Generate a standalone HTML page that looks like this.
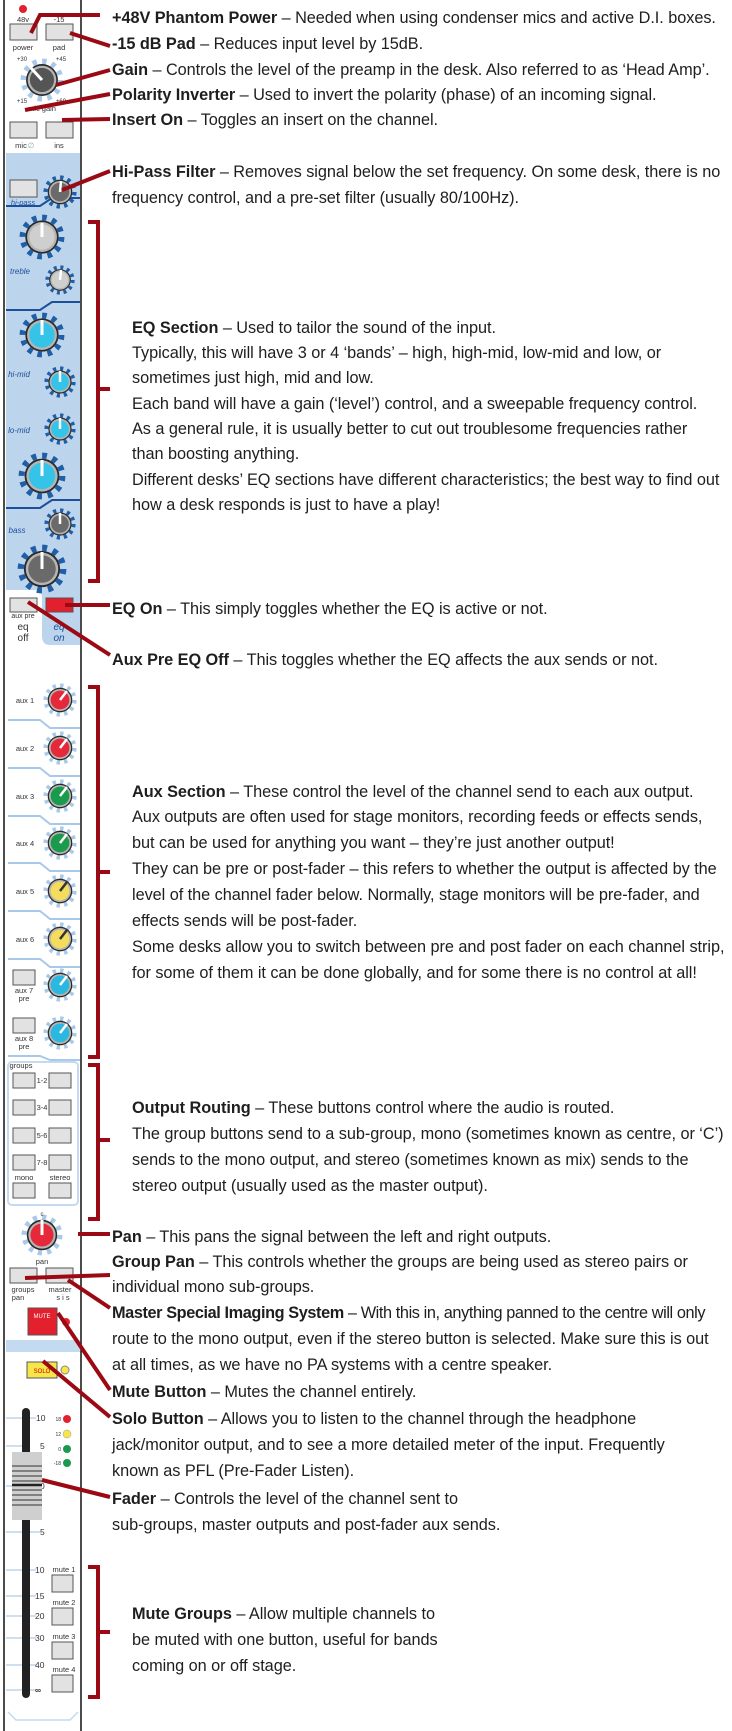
<!DOCTYPE html>
<html><head><meta charset="utf-8"><style>
html,body{margin:0;padding:0;background:#fff;}
body{width:732px;height:1731px;position:relative;overflow:hidden;font-family:"Liberation Sans",sans-serif;}
.t{position:absolute;white-space:nowrap;font-size:16.3px;letter-spacing:-0.05px;line-height:20px;color:#1e1e1e;}
svg{position:absolute;left:0;top:0;}
</style></head><body>
<svg width="732" height="1731" viewBox="0 0 732 1731" font-family="Liberation Sans, sans-serif">
<defs>
<symbol id="kd" viewBox="-20 -20 40 40"><circle r="17" fill="none" stroke="#1f5fa8" stroke-width="5" stroke-dasharray="4 4.9"/><circle r="14.5" fill="#2a2a2a"/><circle r="13" fill="#b5b5b5"/><circle r="11"/></symbol>
<symbol id="kl" viewBox="-20 -20 40 40"><circle r="17" fill="none" stroke="#a9c9ea" stroke-width="5" stroke-dasharray="4 4.9"/><circle r="14.5" fill="#2a2a2a"/><circle r="13" fill="#b5b5b5"/><circle r="11"/></symbol>
</defs>
<rect x="4" y="0" width="77" height="1731" fill="#fff"/>
<rect x="6" y="153" width="74" height="503" fill="#bcd4ec"/>
<path d="M6 590 H34 Q42 590 42 598 V636 Q42 645 50 645 H80 V656 H6 Z" fill="#fff"/>
<path d="M6 206 H40 L52 198 H80" stroke="#1c4f9c" stroke-width="2" fill="none"/>
<path d="M6 310 H40 L52 302 H80" stroke="#1c4f9c" stroke-width="2" fill="none"/>
<path d="M6 508 H40 L52 500 H80" stroke="#1c4f9c" stroke-width="2" fill="none"/>
<line x1="4" y1="0" x2="4" y2="1731" stroke="#111" stroke-width="1.5"/>
<line x1="81" y1="0" x2="81" y2="1731" stroke="#111" stroke-width="1.5"/>
<g fill="#333" font-size="7.5" text-anchor="middle">
<circle cx="23" cy="9" r="4" fill="#e0202e"/>
<text x="23" y="22">48v</text><text x="59" y="22">-15</text>
<rect x="10" y="24" width="27" height="16" fill="#e2e2e2" stroke="#555"/>
<rect x="46" y="24" width="27" height="16" fill="#e2e2e2" stroke="#555"/>
<text x="23" y="50">power</text><text x="59" y="50">pad</text>
<use href="#kl" x="20" y="58" width="44" height="44" fill="#555"/>
<line x1="42" y1="80" x2="31" y2="68" stroke="#fff" stroke-width="3"/>
<text x="22" y="61" font-size="6">+30</text><text x="61" y="61" font-size="6">+45</text>
<text x="22" y="103" font-size="6">+15</text><text x="61" y="103" font-size="6">+60</text>
<text x="42" y="111">mic gain</text>
<rect x="10" y="122" width="27" height="16" fill="#e2e2e2" stroke="#555"/>
<rect x="46" y="122" width="27" height="16" fill="#e2e2e2" stroke="#555"/>
<text x="21" y="148">mic</text><text x="31" y="148" fill="#8ab">∅</text><text x="59" y="148">ins</text>
<rect x="10" y="180" width="27" height="17" fill="#e2e2e2" stroke="#555"/>
<text x="23" y="205" fill="#1c4f9c" font-style="italic">hi-pass</text>
<use href="#kd" x="43" y="175" width="34" height="34" fill="#6a6a6a"/>
<line x1="60" y1="192" x2="61" y2="181" stroke="#fff" stroke-width="2.5"/>
<use href="#kd" x="19" y="214" width="46" height="46" fill="#cfcfcf"/>
<line x1="42" y1="237" x2="42" y2="223" stroke="#fff" stroke-width="3"/>
<text x="20" y="274" fill="#1c4f9c" font-style="italic" font-size="8">treble</text>
<use href="#kd" x="45" y="265" width="30" height="30" fill="#cfcfcf"/>
<line x1="60" y1="280" x2="61" y2="270" stroke="#fff" stroke-width="2.5"/>
<use href="#kd" x="19" y="312" width="46" height="46" fill="#36c3e8"/>
<line x1="42" y1="335" x2="42" y2="320" stroke="#fff" stroke-width="3"/>
<text x="19" y="377" fill="#1c4f9c" font-style="italic" font-size="8">hi-mid</text>
<use href="#kd" x="44" y="366" width="32" height="32" fill="#36c3e8"/>
<line x1="60" y1="382" x2="60" y2="371" stroke="#fff" stroke-width="2.5"/>
<text x="19" y="433" fill="#1c4f9c" font-style="italic" font-size="8">lo-mid</text>
<use href="#kd" x="44" y="413" width="32" height="32" fill="#36c3e8"/>
<line x1="60" y1="429" x2="60" y2="418" stroke="#fff" stroke-width="2.5"/>
<use href="#kd" x="18" y="452" width="48" height="48" fill="#36c3e8"/>
<line x1="42" y1="476" x2="42" y2="460" stroke="#fff" stroke-width="3"/>
<text x="17" y="533" fill="#1c4f9c" font-style="italic" font-size="8">bass</text>
<use href="#kd" x="44" y="508" width="32" height="32" fill="#6a6a6a"/>
<line x1="60" y1="524" x2="60" y2="513" stroke="#fff" stroke-width="2.5"/>
<use href="#kd" x="17" y="544" width="50" height="50" fill="#6a6a6a"/>
<line x1="42" y1="569" x2="42" y2="552" stroke="#fff" stroke-width="3"/>
<rect x="10" y="598" width="27" height="14" fill="#e2e2e2" stroke="#555"/>
<rect x="46" y="598" width="27" height="14" fill="#e3202e" stroke="#555"/>
<text x="23" y="618" font-size="7">aux pre</text>
<text x="23" y="630" font-size="10">eq</text><text x="23" y="641" font-size="10">off</text>
<text x="59" y="630" font-size="10" fill="#1c4f9c" font-style="italic">eq</text><text x="59" y="641" font-size="10" fill="#1c4f9c" font-style="italic">on</text>
</g>
<g font-size="7.5" fill="#333" text-anchor="middle">
<use href="#kl" x="43" y="683" width="34" height="34" fill="#e5283a"/><line x1="60" y1="700" x2="67" y2="691" stroke="#fff" stroke-width="2.5"/><text x="25" y="703">aux 1</text>
<use href="#kl" x="43" y="731" width="34" height="34" fill="#e5283a"/><line x1="60" y1="748" x2="67" y2="739" stroke="#fff" stroke-width="2.5"/><text x="25" y="751">aux 2</text>
<use href="#kl" x="43" y="779" width="34" height="34" fill="#1a9a4c"/><line x1="60" y1="796" x2="67" y2="787" stroke="#fff" stroke-width="2.5"/><text x="25" y="799">aux 3</text>
<use href="#kl" x="43" y="826" width="34" height="34" fill="#1a9a4c"/><line x1="60" y1="843" x2="67" y2="834" stroke="#fff" stroke-width="2.5"/><text x="25" y="846">aux 4</text>
<use href="#kl" x="43" y="874" width="34" height="34" fill="#f4dc5c"/><line x1="60" y1="891" x2="67" y2="882" stroke="#333" stroke-width="2.5"/><text x="25" y="894">aux 5</text>
<use href="#kl" x="43" y="922" width="34" height="34" fill="#f4dc5c"/><line x1="60" y1="939" x2="67" y2="930" stroke="#333" stroke-width="2.5"/><text x="25" y="942">aux 6</text>
<use href="#kl" x="43" y="968" width="34" height="34" fill="#2ab8e0"/><line x1="60" y1="985" x2="67" y2="976" stroke="#fff" stroke-width="2.5"/>
<rect x="13" y="970" width="22" height="15" fill="#e2e2e2" stroke="#555"/><text x="24" y="993">aux 7</text><text x="24" y="1001">pre</text>
<use href="#kl" x="43" y="1016" width="34" height="34" fill="#2ab8e0"/><line x1="60" y1="1033" x2="67" y2="1024" stroke="#fff" stroke-width="2.5"/>
<rect x="13" y="1018" width="22" height="15" fill="#e2e2e2" stroke="#555"/><text x="24" y="1041">aux 8</text><text x="24" y="1049">pre</text>
<path d="M8 720 H40 L50 728 H80 M8 768 H40 L50 776 H80 M8 816 H40 L50 824 H80 M8 863 H40 L50 871 H80 M8 911 H40 L50 919 H80 M8 959 H40 L50 967 H80 M8 1056 H40 L50 1060 H80" stroke="#a9c9ea" stroke-width="2" fill="none"/>
<rect x="8" y="1062" width="70" height="143" rx="4" fill="none" stroke="#c4daf0" stroke-width="2"/>
<text x="21" y="1068">groups</text>
<g fill="#e2e2e2" stroke="#555">
<rect x="13" y="1073" width="22" height="15"/><rect x="49" y="1073" width="22" height="15"/>
<rect x="13" y="1100" width="22" height="15"/><rect x="49" y="1100" width="22" height="15"/>
<rect x="13" y="1128" width="22" height="15"/><rect x="49" y="1128" width="22" height="15"/>
<rect x="13" y="1155" width="22" height="15"/><rect x="49" y="1155" width="22" height="15"/>
<rect x="13" y="1183" width="22" height="15"/><rect x="49" y="1183" width="22" height="15"/>
</g>
<text x="42" y="1083">1-2</text><text x="42" y="1110">3-4</text><text x="42" y="1138">5-6</text><text x="42" y="1165">7-8</text>
<text x="24" y="1180">mono</text><text x="60" y="1180">stereo</text>
<use href="#kl" x="21" y="1214" width="42" height="42" fill="#e5283a"/>
<line x1="42" y1="1235" x2="42" y2="1220" stroke="#fff" stroke-width="3"/>
<text x="42" y="1216" font-size="6">c</text>
<text x="42" y="1264">pan</text>
<rect x="10" y="1268" width="27" height="15" fill="#e2e2e2" stroke="#555"/>
<rect x="46" y="1268" width="27" height="15" fill="#e2e2e2" stroke="#555"/>
<text x="23" y="1292">groups</text><text x="18" y="1300">pan</text><text x="60" y="1292">master</text><text x="63" y="1300">s i s</text>
<rect x="28" y="1308" width="29" height="27" fill="#e3202e" stroke="#555"/>
<text x="42" y="1318" font-size="6" fill="#fff">MUTE</text>
<circle cx="66" cy="1322" r="4" fill="#e3202e"/>
<rect x="6" y="1340" width="74" height="12" fill="#c4daf0"/>
<rect x="27" y="1362" width="30" height="16" fill="#f6e64a" stroke="#555"/>
<text x="42" y="1373" font-size="6" fill="#c00">SOLO</text>
<circle cx="65" cy="1370" r="4" fill="#f6e64a" stroke="#888"/>
<g stroke="#bcd4ec" stroke-width="1.5">
<line x1="6" y1="1418" x2="22" y2="1418"/><line x1="6" y1="1446" x2="22" y2="1446"/><line x1="6" y1="1486" x2="22" y2="1486"/><line x1="6" y1="1532" x2="22" y2="1532"/><line x1="6" y1="1570" x2="22" y2="1570"/><line x1="6" y1="1596" x2="22" y2="1596"/><line x1="6" y1="1616" x2="22" y2="1616"/><line x1="6" y1="1638" x2="22" y2="1638"/><line x1="6" y1="1665" x2="22" y2="1665"/><line x1="6" y1="1690" x2="22" y2="1690"/>
<line x1="30" y1="1418" x2="36" y2="1418"/><line x1="30" y1="1532" x2="40" y2="1532"/><line x1="30" y1="1570" x2="36" y2="1570"/><line x1="30" y1="1596" x2="36" y2="1596"/><line x1="30" y1="1616" x2="36" y2="1616"/><line x1="30" y1="1638" x2="36" y2="1638"/><line x1="30" y1="1665" x2="36" y2="1665"/><line x1="30" y1="1690" x2="36" y2="1690"/>
</g>
<rect x="22" y="1408" width="8" height="290" rx="4" fill="#222"/>
<g text-anchor="start" font-size="8.5">
<text x="36" y="1421">10</text><text x="40" y="1449">5</text><text x="40" y="1489">0</text><text x="40" y="1535">5</text><text x="35" y="1573">10</text><text x="35" y="1599">15</text><text x="35" y="1619">20</text><text x="35" y="1641">30</text><text x="35" y="1668">40</text><text x="35" y="1693" font-weight="bold">∞</text>
</g>
<rect x="12" y="1452" width="30" height="68" fill="#cfcfcf"/>
<g stroke="#666" stroke-width="1.5"><line x1="12" y1="1466" x2="42" y2="1466"/><line x1="12" y1="1471" x2="42" y2="1471"/><line x1="12" y1="1476" x2="42" y2="1476"/><line x1="12" y1="1481" x2="42" y2="1481"/><line x1="12" y1="1490" x2="42" y2="1490"/><line x1="12" y1="1495" x2="42" y2="1495"/><line x1="12" y1="1500" x2="42" y2="1500"/><line x1="12" y1="1505" x2="42" y2="1505"/></g>
<line x1="12" y1="1485" x2="42" y2="1485" stroke="#222" stroke-width="2.5"/>
<circle cx="67" cy="1419" r="4" fill="#e3202e"/><circle cx="67" cy="1434" r="4" fill="#f6e64a" stroke="#999" stroke-width=".5"/><circle cx="67" cy="1449" r="4" fill="#1a9a4c"/><circle cx="67" cy="1463" r="4" fill="#1a9a4c"/>
<g font-size="5" text-anchor="end"><text x="61" y="1421">18</text><text x="61" y="1436">12</text><text x="61" y="1451">0</text><text x="61" y="1465">-18</text></g>
<g fill="#e2e2e2" stroke="#555"><rect x="52" y="1575" width="21" height="17"/><rect x="52" y="1608" width="21" height="17"/><rect x="52" y="1642" width="21" height="17"/><rect x="52" y="1675" width="21" height="17"/></g>
<text x="64" y="1572">mute 1</text><text x="64" y="1605">mute 2</text><text x="64" y="1639">mute 3</text><text x="64" y="1672">mute 4</text>
<path d="M8 1712 L16 1720 H70 L78 1712" stroke="#c4daf0" stroke-width="1.5" fill="none"/>
</g>
<g stroke="#9b0a14" stroke-width="4" fill="none">
<path d="M31 33 L40 15 H100"/>
<path d="M70 33 L110 46"/>
<path d="M56 85 L110 70"/>
<path d="M25 110 L110 94"/>
<path d="M62 120 L110 119"/>
<path d="M62 190 L110 171"/>
<path d="M88 222 H98 V581 H88 M98 389 H110"/>
<path d="M65 605 H110"/>
<path d="M28 602 L110 655"/>
<path d="M88 687 H98 V1057 H88 M98 872 H110"/>
<path d="M88 1065 H98 V1219 H88 M98 1140 H110"/>
<path d="M78 1234 H110"/>
<path d="M25 1278 L110 1275"/>
<path d="M68 1280 L110 1308"/>
<path d="M58 1313 L110 1390"/>
<path d="M43 1361 L110 1417"/>
<path d="M42 1480 L110 1497"/>
<path d="M88 1567 H98 V1697 H88 M98 1632 H110"/>
</g>
</svg>

<div class="t" style="left:112px;top:8px"><b>+48V Phantom Power</b> – Needed when using condenser mics and active D.I. boxes.</div>
<div class="t" style="left:112px;top:34px"><b>-15 dB Pad</b> – Reduces input level by 15dB.</div>
<div class="t" style="left:112px;top:60px"><b>Gain</b> – Controls the level of the preamp in the desk. Also referred to as ‘Head Amp’.</div>
<div class="t" style="left:112px;top:85px"><b>Polarity Inverter</b> – Used to invert the polarity (phase) of an incoming signal.</div>
<div class="t" style="left:112px;top:110px"><b>Insert On</b> – Toggles an insert on the channel.</div>
<div class="t" style="left:112px;top:162px"><b>Hi-Pass Filter</b> – Removes signal below the set frequency. On some desk, there is no</div>
<div class="t" style="left:112px;top:188px">frequency control, and a pre-set filter (usually 80/100Hz).</div>

<div class="t" style="left:132px;top:318px"><b>EQ Section</b> – Used to tailor the sound of the input.</div>
<div class="t" style="left:132px;top:343px">Typically, this will have 3 or 4 ‘bands’ – high, high-mid, low-mid and low, or</div>
<div class="t" style="left:132px;top:368px">sometimes just high, mid and low.</div>
<div class="t" style="left:132px;top:394px">Each band will have a gain (‘level’) control, and a sweepable frequency control.</div>
<div class="t" style="left:132px;top:419px">As a general rule, it is usually better to cut out troublesome frequencies rather</div>
<div class="t" style="left:132px;top:444px">than boosting anything.</div>
<div class="t" style="left:132px;top:470px">Different desks’ EQ sections have different characteristics; the best way to find out</div>
<div class="t" style="left:132px;top:495px">how a desk responds is just to have a play!</div>

<div class="t" style="left:112px;top:599px"><b>EQ On</b> – This simply toggles whether the EQ is active or not.</div>
<div class="t" style="left:112px;top:650px"><b>Aux Pre EQ Off</b> – This toggles whether the EQ affects the aux sends or not.</div>

<div class="t" style="left:132px;top:782px"><b>Aux Section</b> – These control the level of the channel send to each aux output.</div>
<div class="t" style="left:132px;top:807px">Aux outputs are often used for stage monitors, recording feeds or effects sends,</div>
<div class="t" style="left:132px;top:833px">but can be used for anything you want – they’re just another output!</div>
<div class="t" style="left:132px;top:859px">They can be pre or post-fader – this refers to whether the output is affected by the</div>
<div class="t" style="left:132px;top:885px">level of the channel fader below. Normally, stage monitors will be pre-fader, and</div>
<div class="t" style="left:132px;top:911px">effects sends will be post-fader.</div>
<div class="t" style="left:132px;top:937px">Some desks allow you to switch between pre and post fader on each channel strip,</div>
<div class="t" style="left:132px;top:963px">for some of them it can be done globally, and for some there is no control at all!</div>

<div class="t" style="left:132px;top:1098px"><b>Output Routing</b> – These buttons control where the audio is routed.</div>
<div class="t" style="left:132px;top:1124px">The group buttons send to a sub-group, mono (sometimes known as centre, or ‘C’)</div>
<div class="t" style="left:132px;top:1150px">sends to the mono output, and stereo (sometimes known as mix) sends to the</div>
<div class="t" style="left:132px;top:1176px">stereo output (usually used as the master output).</div>

<div class="t" style="left:112px;top:1227px"><b>Pan</b> – This pans the signal between the left and right outputs.</div>
<div class="t" style="left:112px;top:1252px"><b>Group Pan</b> – This controls whether the groups are being used as stereo pairs or</div>
<div class="t" style="left:112px;top:1277px">individual mono sub-groups.</div>
<div class="t" style="left:112px;top:1303px;letter-spacing:-0.4px"><b>Master Special Imaging System</b> – With this in, anything panned to the centre will only</div>
<div class="t" style="left:112px;top:1329px">route to the mono output, even if the stereo button is selected. Make sure this is out</div>
<div class="t" style="left:112px;top:1355px">at all times, as we have no PA systems with a centre speaker.</div>
<div class="t" style="left:112px;top:1382px"><b>Mute Button</b> – Mutes the channel entirely.</div>
<div class="t" style="left:112px;top:1409px"><b>Solo Button</b> – Allows you to listen to the channel through the headphone</div>
<div class="t" style="left:112px;top:1435px">jack/monitor output, and to see a more detailed meter of the input. Frequently</div>
<div class="t" style="left:112px;top:1461px">known as PFL (Pre-Fader Listen).</div>
<div class="t" style="left:112px;top:1489px"><b>Fader</b> – Controls the level of the channel sent to</div>
<div class="t" style="left:112px;top:1515px">sub-groups, master outputs and post-fader aux sends.</div>

<div class="t" style="left:132px;top:1604px"><b>Mute Groups</b> – Allow multiple channels to</div>
<div class="t" style="left:132px;top:1630px">be muted with one button, useful for bands</div>
<div class="t" style="left:132px;top:1656px">coming on or off stage.</div>
</body></html>
